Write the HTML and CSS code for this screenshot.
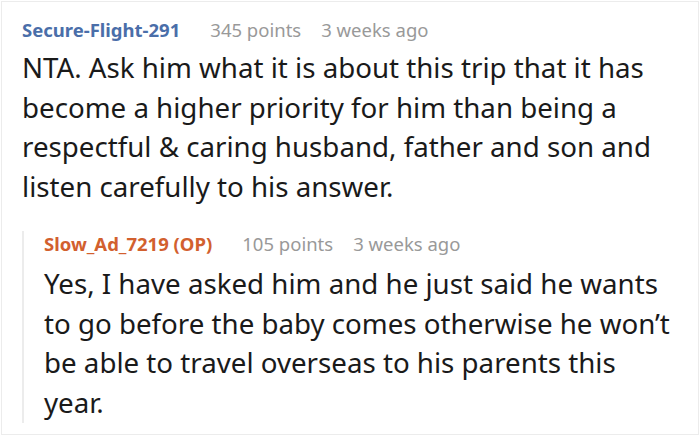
FILE: index.html
```html
<!DOCTYPE html>
<html>
<head>
<meta charset="utf-8">
<link rel="stylesheet" href="styles.css">
</head>
<body>
<div class="card">
  <div class="comment">
    <div class="meta">
      <span class="user">Secure-Flight-291</span>
      <span class="info">345 points</span>
      <span class="info">3 weeks ago</span>
    </div>
    <p class="body first">NTA. Ask him what it is about this trip that it has become a higher priority for him than being a respectful &amp; caring husband, father and son and listen carefully to his answer.</p>
    <div class="reply">
      <div class="meta">
        <span class="user op">Slow_Ad_7219 (OP)</span>
        <span class="info">105 points</span>
        <span class="info">3 weeks ago</span>
      </div>
      <p class="body">Yes, I have asked him and he just said he wants to go before the baby comes otherwise he won’t be able to travel overseas to his parents this year.</p>
    </div>
  </div>
</div>
</body>
</html>
```
FILE: styles.css
```css
html, body {
  margin: 0;
  padding: 0;
  background: #fff;
}
.card {
  width: 698px;
  height: 434px;
  margin: 1px 0 0 1px;
  border: 1px solid #ececec;
  box-sizing: border-box;
  font-family: "Noto Sans", sans-serif;
  overflow: hidden;
}
.comment {
  padding: 15px 16px 0 20px;
}
.meta {
  display: flex;
  gap: 20px;
  font-size: 18.5px;
  line-height: 26px;
}
.user {
  font-weight: 700;
  color: #4a6ea9;
  margin-right: 10px;
}
.user.op {
  color: #d2602e;
}
.info {
  color: #999;
}
.body {
  margin: 7px 0 0 0;
  font-size: 27.7px;
  line-height: 39.7px;
  color: #1a1a1a;
}
.body.first {
  margin-top: 5px;
}
.reply {
  margin-top: 24px;
  border-left: 2px solid #ececec;
  padding-left: 20px;
}
```
